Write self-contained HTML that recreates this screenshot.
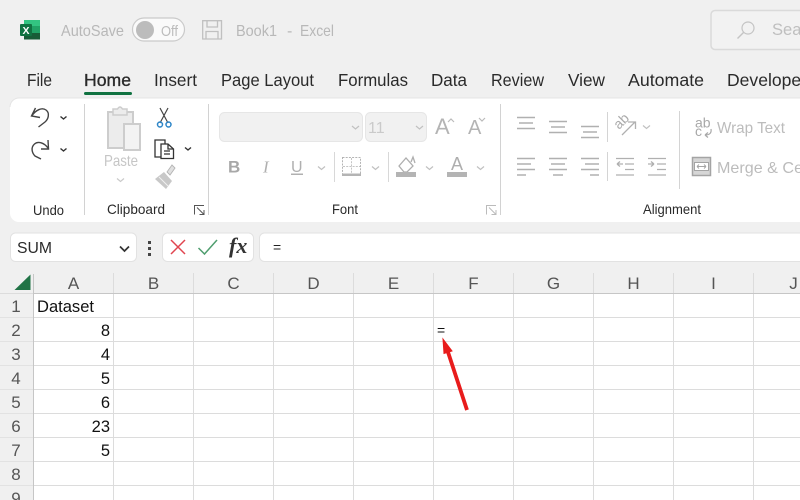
<!DOCTYPE html>
<html><head><meta charset="utf-8"><style>
html,body{margin:0;padding:0;width:800px;height:500px;overflow:hidden;background:#f0f0f0}
svg{display:block}
text{font-family:"Liberation Sans",sans-serif}
</style></head><body>
<svg width="800" height="500" viewBox="0 0 800 500" xmlns="http://www.w3.org/2000/svg">
<rect width="800" height="500" fill="#f0f0f0"/>
<!-- title bar -->
<rect x="24" y="20" width="16" height="19.500" rx="1" fill="#1f9a5c"/>
<rect x="24" y="20" width="16" height="6" fill="#33c481"/>
<rect x="32" y="26" width="8" height="7" fill="#21a366"/>
<rect x="24" y="33" width="16" height="6.500" fill="#185c37"/>
<rect x="20" y="24" width="12" height="12" rx="1" fill="#107241"/>
<text x="26" y="34" font-size="10.500" font-weight="bold" fill="#fff" text-anchor="middle">X</text>
<text x="61" y="36" font-size="16" fill="#b8b8b8" textLength="63" lengthAdjust="spacingAndGlyphs">AutoSave</text>
<rect x="132.500" y="18" width="52" height="23" rx="11.500" fill="#fafafa" stroke="#cacaca" stroke-width="1.200"/>
<circle cx="145" cy="30" r="9" fill="#bcbcbc"/>
<text x="161" y="36" font-size="15" fill="#bcbcbc" textLength="17" lengthAdjust="spacingAndGlyphs">Off</text>
<g fill="none" stroke="#c0c0c0" stroke-width="1.300"><path d="M202.700 20.700H221.500V39H202.700Z"/><path d="M207 20.700V27H217.500V20.700M206 39V31.500H218V39"/></g>
<text x="236" y="36" font-size="16" fill="#b8b8b8" textLength="41" lengthAdjust="spacingAndGlyphs">Book1</text>
<text x="287" y="36" font-size="16" fill="#b8b8b8">-</text>
<text x="300" y="36" font-size="16" fill="#b8b8b8" textLength="34" lengthAdjust="spacingAndGlyphs">Excel</text>
<!-- search -->
<rect x="711" y="10.500" width="100" height="39" rx="4" fill="#f2f2f2" stroke="#dadada" stroke-width="1.500"/>
<circle cx="748" cy="28" r="6" fill="none" stroke="#c4c4c4" stroke-width="1.200"/>
<path d="M743.500 32.500L737.500 38.500" stroke="#c4c4c4" stroke-width="1.400"/>
<text x="772" y="35" font-size="17" fill="#bfbfbf" textLength="35" lengthAdjust="spacingAndGlyphs">Sear</text>
<!-- tabs -->
<g font-size="17.500" fill="#2a2a2a">
<text x="27" y="86" textLength="25" lengthAdjust="spacingAndGlyphs">File</text>
<text x="84" y="86" textLength="47" lengthAdjust="spacingAndGlyphs" stroke="#2a2a2a" stroke-width=".35">Home</text>
<text x="154" y="86" textLength="43" lengthAdjust="spacingAndGlyphs">Insert</text>
<text x="221" y="86" textLength="93" lengthAdjust="spacingAndGlyphs">Page Layout</text>
<text x="338" y="86" textLength="70" lengthAdjust="spacingAndGlyphs">Formulas</text>
<text x="431" y="86" textLength="36" lengthAdjust="spacingAndGlyphs">Data</text>
<text x="491" y="86" textLength="53" lengthAdjust="spacingAndGlyphs">Review</text>
<text x="568" y="86" textLength="37" lengthAdjust="spacingAndGlyphs">View</text>
<text x="628" y="86" textLength="76" lengthAdjust="spacingAndGlyphs">Automate</text>
<text x="727" y="86" textLength="80" lengthAdjust="spacingAndGlyphs">Developer</text>
</g>
<rect x="84" y="92" width="48" height="3" rx="1.500" fill="#107241"/>
<!-- ribbon -->
<rect x="10" y="98" width="820" height="124" rx="9" fill="#fff"/>
<path d="M10 107a9 9 0 0 1 9-9H800" fill="none" stroke="#e4e4e4"/>
<g stroke="#d2d2d2" stroke-width="1"><path d="M84.500 104V215M208.500 104V215M500.500 104V215"/></g>
<!-- undo/redo -->
<g fill="none" stroke="#444" stroke-width="1.400">
<path d="M35.500 108L31.500 116L40 117.500M32 115.500C36 110 42 107 46 110C50 113 48.500 119 45 122L38.500 127"/>
<path d="M48 140L48.500 149L41 149M48 148C44 142.500 38 141 34.500 144C30.500 147.500 32 153 35 156L41 159"/>
</g>
<g fill="none" stroke="#333" stroke-width="1.400"><path d="M60.500 116.500L63.500 119L66.500 116.500M60.500 148.500L63.500 151L66.500 148.500M185 147.500L188 150L191 147.500"/></g>
<!-- paste -->
<rect x="108" y="112" width="25" height="36" fill="#ececec" stroke="#cdcdcd" stroke-width="2"/>
<path d="M113 112V109H117.500Q120 105 122.500 109H127V112V115H113Z" fill="#ececec" stroke="#cdcdcd" stroke-width="1.500"/>
<rect x="124" y="124" width="16" height="26" fill="#f3f3f3" stroke="#cdcdcd" stroke-width="2"/>
<text x="104" y="166" font-size="16" fill="#c6c6c6" textLength="34" lengthAdjust="spacingAndGlyphs">Paste</text>
<path d="M117 178.500L120.500 181.500L124 178.500" fill="none" stroke="#cacaca" stroke-width="1.200"/>
<!-- scissors -->
<g fill="none"><path d="M160 108L168 123M168 108L160 123" stroke="#444" stroke-width="1.200"/><circle cx="160" cy="124.500" r="2.500" stroke="#2e86c8" stroke-width="1.500"/><circle cx="168.500" cy="124.500" r="2.500" stroke="#2e86c8" stroke-width="1.500"/></g>
<!-- copy -->
<g fill="#fff" stroke="#333" stroke-width="1.300"><path d="M155 140H165V157H155Z"/><path d="M161 144H168L173.500 149V158.500H161Z"/><path d="M164 151H170M164 154H170M168 144V149H173" fill="none"/></g>
<!-- format painter -->
<g><path d="M155 179L164 172L172 181L166 189Z" fill="#c8c8c8"/><path d="M167 172L172 165L175 168L170 175Z" fill="#e0e0e0" stroke="#b4b4b4" stroke-width=".9"/><path d="M159 177L168 186" stroke="#f0f0f0"/></g>
<!-- labels -->
<g font-size="14" fill="#2a2a2a">
<text x="33" y="215" textLength="31" lengthAdjust="spacingAndGlyphs">Undo</text>
<text x="107" y="214" textLength="58" lengthAdjust="spacingAndGlyphs">Clipboard</text>
<text x="332" y="214" textLength="26" lengthAdjust="spacingAndGlyphs">Font</text>
<text x="643" y="214" textLength="58" lengthAdjust="spacingAndGlyphs">Alignment</text>
</g>
<g fill="none" stroke="#555" stroke-width="1"><path d="M194.500 214.500V205.500H204M197 207.500L204 214.500M204 210V214.500H199.500"/></g>
<g fill="none" stroke="#bbb" stroke-width="1"><path d="M486.500 214.500V205.500H496M489 207.500L496 214.500M496 210V214.500H491.500"/></g>
<!-- font group -->
<rect x="219.500" y="112.500" width="143" height="29" rx="5" fill="#f1f1f1" stroke="#e6e6e6"/>
<rect x="365.500" y="112.500" width="61" height="29" rx="5" fill="#f1f1f1" stroke="#e6e6e6"/>
<text x="368" y="133" font-size="16" fill="#cacaca">11</text>
<g fill="none" stroke="#c0c0c0" stroke-width="1.200"><path d="M352 126L355.500 129L359 126M416 126L419.500 129L423 126M318 166.500L321.500 169.500L325 166.500M372 166.500L375.500 169.500L379 166.500M426 166.500L429.500 169.500L433 166.500M477 166.500L480.500 169.500L484 166.500"/><path d="M448 122L451 119L454 122" stroke="#bbb"/><path d="M479 118L482 121L485 118" stroke="#bbb"/></g>
<text x="435" y="134" font-size="22" fill="#b4b4b4">A</text>
<text x="468" y="134" font-size="20" fill="#b4b4b4">A</text>
<text x="228" y="172.500" font-size="17" font-weight="bold" fill="#a8a8a8">B</text>
<text x="263" y="172.500" font-size="17" font-style="italic" fill="#b0b0b0" style="font-family:'Liberation Serif',serif">I</text>
<text x="291" y="172" font-size="16" fill="#b0b0b0">U</text>
<rect x="291" y="173.500" width="12" height="1.500" fill="#b0b0b0"/>
<path d="M334.500 152V182M388.500 152V182" stroke="#d8d8d8"/>
<rect x="342.500" y="157.500" width="18" height="18" fill="none" stroke="#b4b4b4" stroke-dasharray="2 1.200"/>
<path d="M351.500 158V175M343 166.500H360" stroke="#c4c4c4" stroke-dasharray="2 1.200"/>
<rect x="342" y="173.500" width="19" height="2.500" fill="#b4b4b4"/>
<path d="M399 166L406 158L413 166L407 172H404Z" fill="none" stroke="#aeaeae" stroke-width="1.300"/>
<path d="M411 162L413 157L415 163" fill="none" stroke="#aeaeae" stroke-width="1.300"/>
<rect x="396" y="172" width="20" height="5" fill="#b4b4b4"/>
<text x="451" y="170" font-size="18" fill="#aeaeae">A</text>
<rect x="447" y="172" width="20" height="5" fill="#b4b4b4"/>
<!-- alignment -->
<g fill="none" stroke="#b0b0b0" stroke-width="1.500">
<path d="M517 117.500H535M519 123H533M517 128.500H535"/>
<path d="M549 121.500H567M551 127H565M549 132.500H567"/>
<path d="M581 126.500H599M583 132H597M581 137.500H599"/>
<path d="M517 158.500H535M517 164H531M517 169.500H535M517 175H526"/>
<path d="M549 158.500H567M551 164H565M549 169.500H567M553 175H563"/>
<path d="M581 158.500H599M585 164H599M581 169.500H599M590 175H599"/>
<path d="M616 158.500H634M625 164H634M625 169.500H634M616 175H634M617 164H623M617 164L620 161.500M617 164L620 166.500" stroke-width="1.300"/>
<path d="M648 158.500H666M657 164H666M657 169.500H666M648 175H666M648 164H654M654 164L651 161.500M654 164L651 166.500" stroke-width="1.300"/>
<path d="M622 135L635 122M628 122H635.500V129" stroke-width="1.300"/>
</g>
<text transform="translate(619 130) rotate(-45)" font-size="14" fill="#aaa">ab</text>
<path d="M643 125.500L646.500 128.500L650 125.500" fill="none" stroke="#c0c0c0" stroke-width="1.200"/>
<path d="M607.500 112V142M607.500 152V181M679.500 111V189" stroke="#d4d4d4"/>
<text x="695" y="127.500" font-size="14" fill="#a8a8a8">ab</text>
<text x="695" y="136" font-size="14" fill="#a8a8a8">c</text>
<path d="M711 129Q712 135 705 135M705 135L708 132.500M705 135L708 137.500" fill="none" stroke="#a8a8a8" stroke-width="1.200"/>
<text x="717" y="133" font-size="16" fill="#bcbcbc" textLength="68" lengthAdjust="spacingAndGlyphs">Wrap Text</text>
<rect x="692.500" y="157.500" width="18" height="18" fill="#d6d6d6" stroke="#a4a4a4" stroke-width="1.500"/>
<rect x="694.500" y="162.500" width="14" height="8" fill="#fff" stroke="#a4a4a4"/>
<path d="M697 166.500H706M697 166.500L699 164.500M697 166.500L699 168.500M706 166.500L704 164.500M706 166.500L704 168.500" stroke="#a4a4a4" fill="none" stroke-width=".9"/>
<text x="717" y="173" font-size="16" fill="#bcbcbc" textLength="95" lengthAdjust="spacingAndGlyphs">Merge &amp; Cen</text>
<!-- formula bar -->
<rect x="10.500" y="233" width="126" height="28.500" rx="5" fill="#fff" stroke="#e2e2e2"/>
<text x="17" y="253" font-size="16" fill="#2a2a2a" textLength="35" lengthAdjust="spacingAndGlyphs">SUM</text>
<path d="M120 246.500L124.500 251L129 246.500" fill="none" stroke="#333" stroke-width="1.700"/>
<g fill="#444"><rect x="148" y="241" width="3" height="3"/><rect x="148" y="247" width="3" height="3"/><rect x="148" y="253" width="3" height="3"/></g>
<rect x="162.500" y="233" width="91" height="28.500" rx="5" fill="#fff" stroke="#e2e2e2"/>
<path d="M171 240L185 254M185 240L171 254" stroke="#e0454f" stroke-width="1.500" fill="none"/>
<path d="M198.500 248L204.500 254L217 240" stroke="#4f9e6f" stroke-width="1.500" fill="none"/>
<text x="229" y="253" font-size="22" font-style="italic" font-weight="bold" fill="#333" style="font-family:'Liberation Serif',serif">fx</text>
<rect x="259.500" y="233" width="560" height="28.500" rx="5" fill="#fff" stroke="#e2e2e2"/>
<text x="273" y="252" font-size="14" fill="#222">=</text>
<!-- grid -->
<rect x="34" y="294" width="766" height="206" fill="#fff"/>
<g stroke="#dcdcdc" stroke-width="1">
<path d="M0 293.500H800"/>
<path d="M34 317.500H800M34 341.500H800M34 365.500H800M34 389.500H800M34 413.500H800M34 437.500H800M34 461.500H800M34 485.500H800"/>
<path d="M113.500 273V500M193.500 273V500M273.500 273V500M353.500 273V500M433.500 273V500M513.500 273V500M593.500 273V500M673.500 273V500M753.500 273V500"/>
</g>
<path d="M0 317.500H33M0 341.500H33M0 365.500H33M0 389.500H33M0 413.500H33M0 437.500H33M0 461.500H33M0 485.500H33" stroke="#e2e2e2"/>
<path d="M33.500 274V500M33 293.500H800" stroke="#c6c6c6" stroke-width="1"/>
<path d="M14.500 290L30.500 274.500V290Z" fill="#217346"/>
<g font-size="17" fill="#555" text-anchor="middle">
<text x="73.500" y="289">A</text><text x="153.500" y="289">B</text><text x="233.500" y="289">C</text><text x="313.500" y="289">D</text><text x="393.500" y="289">E</text><text x="473.500" y="289">F</text><text x="553.500" y="289">G</text><text x="633.500" y="289">H</text><text x="713.500" y="289">I</text><text x="793.500" y="289">J</text>
<text x="16" y="312">1</text><text x="16" y="336">2</text><text x="16" y="360">3</text><text x="16" y="384">4</text><text x="16" y="408">5</text><text x="16" y="432">6</text><text x="16" y="456">7</text><text x="16" y="480">8</text><text x="16" y="504">9</text>
</g>
<g font-size="16.500" fill="#111">
<text x="37" y="312" textLength="57" lengthAdjust="spacingAndGlyphs">Dataset</text>
<g text-anchor="end"><text x="110" y="336">8</text><text x="110" y="360">4</text><text x="110" y="384">5</text><text x="110" y="408">6</text><text x="110" y="432">23</text><text x="110" y="456">5</text></g>
<text x="437" y="335" font-size="14">=</text>
</g>
<!-- arrow -->
<path d="M467 410L447 349" stroke="#e81c1c" stroke-width="3.800" fill="none"/>
<path d="M443 339L452 351L444 353.500Z" fill="#e81c1c" stroke="#e81c1c" stroke-width="1"/>
</svg>
</body></html>
